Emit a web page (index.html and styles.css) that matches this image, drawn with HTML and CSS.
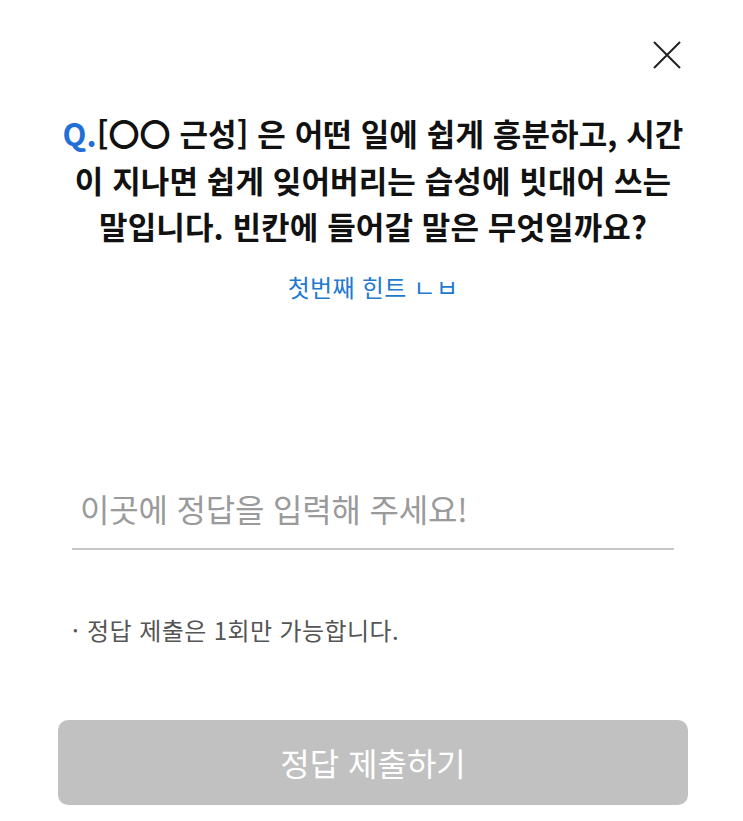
FILE: index.html
```html
<!DOCTYPE html>
<html lang="ko">
<head>
    <meta charset="UTF-8">
    <meta name="viewport" content="width=device-width, initial-scale=1.0">
    <title>정답 제출</title>
    <link rel="stylesheet" href="styles.css">
</head>
<body>

    <div class="quiz">
        <div class="quiz-top">
            <button class="close" type="button" aria-label="닫기">
                <svg width="30" height="30" viewBox="0 0 30 30">
                    <path d="M2 2 L28 28 M28 2 L2 28" stroke="#222" stroke-width="2" fill="none"/>
                </svg>
            </button>
        </div>

        <h1 class="question"><span class="q">Q.</span>[〇〇 근성] 은 어떤 일에 쉽게 흥분하고, 시간<br>이 지나면 쉽게 잊어버리는 습성에 빗대어 쓰는<br>말입니다. 빈칸에 들어갈 말은 무엇일까요?</h1>

        <p class="hint">첫번째 힌트 ㄴㅂ</p>

        <form class="answer-form">
            <input type="text" class="answer" placeholder="이곳에 정답을 입력해 주세요!">
            <p class="note"><span class="dot">·</span>정답 제출은 1회만 가능합니다.</p>
            <button type="submit" class="submit" disabled>정답 제출하기</button>
        </form>
    </div>

</body>
</html>
```

FILE: styles.css
```css
/* 퀴즈 정답 입력 화면 */
body { margin: 0; background: #fff; font-family: "Noto Sans CJK KR", "Noto Sans", sans-serif; color: #111; }
.quiz { width: 743px; height: 821px; box-sizing: border-box; padding: 0 55px 0 58px; display: flex; flex-direction: column; }
.quiz-top { display: flex; justify-content: flex-end; padding-top: 40px; margin-right: 6px; }
.close { background: none; border: none; padding: 0; width: 30px; height: 30px; cursor: pointer; }
.close svg { display: block; }
.question { margin: 40px -10px 0; font-size: 31px; font-weight: 700; line-height: 46.5px; text-align: center; letter-spacing: 0.1px; }
.q { color: #1f6fd6; }
.hint { margin: 22px 0 0; font-size: 24px; line-height: 30px; text-align: center; color: #2179d0; letter-spacing: 0.3px; }
.answer-form { display: flex; flex-direction: column; margin-top: 186px; }
.answer { margin: 0 14px 0 14px; padding: 0 8px 20px; border: none; border-bottom: 2px solid #c8c8c8; font-family: inherit; font-size: 32px; line-height: 40px; color: #333; outline: none; letter-spacing: -0.2px; }
.answer::placeholder { color: #9a9a9a; }
.note { margin: 65px 0 0 14px; font-size: 24px; line-height: 30px; color: #555; letter-spacing: 0.4px; }
.dot { margin-right: 8px; }
.submit { margin-top: 75px; height: 85px; border: none; border-radius: 10px; background: #c1c1c1; color: #fff; font-family: inherit; font-size: 32px; letter-spacing: 0; }
```
